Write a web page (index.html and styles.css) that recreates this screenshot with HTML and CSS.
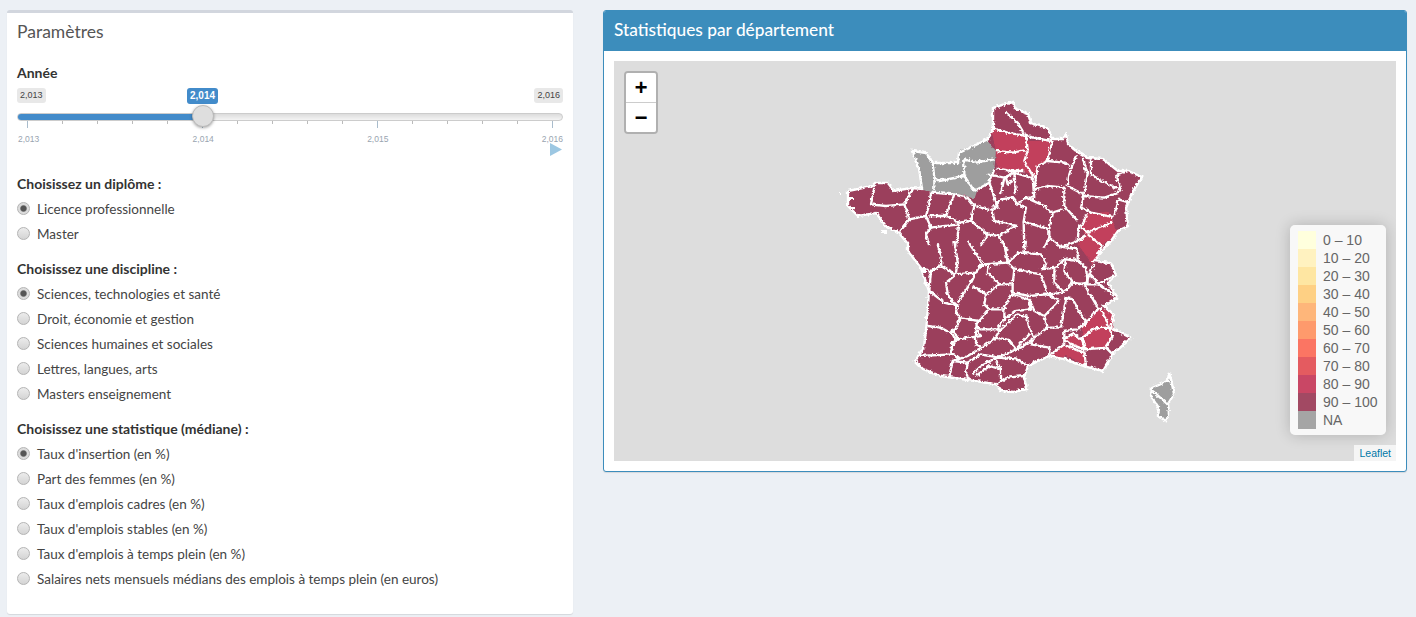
FILE: index.html
```html
<!DOCTYPE html>
<html lang="fr">
<head>
<meta charset="utf-8">
<title>Statistiques par département</title>
<link rel="stylesheet" href="styles.css">
</head>
<body>
<div class="page">
  <aside class="box params">
    <h3 class="params-title">Paramètres</h3>
    <div class="group-label">Année</div>
    <div class="slider">
      <div class="slider-edges"><span class="edge">2,013</span><span class="edge">2,016</span></div>
      <span class="current">2,014</span>
      <div class="track"><div class="track-fill"></div></div>
      <span class="handle"></span>
      <div class="ticks">
        <i class="tick major"></i><i class="tick"></i><i class="tick"></i><i class="tick"></i><i class="tick"></i>
        <i class="tick major"></i><i class="tick"></i><i class="tick"></i><i class="tick"></i><i class="tick"></i>
        <i class="tick major"></i><i class="tick"></i><i class="tick"></i><i class="tick"></i><i class="tick"></i>
        <i class="tick major"></i>
      </div>
      <div class="tick-labels"><span>2,013</span><span>2,014</span><span>2,015</span><span>2,016</span></div>
      <div class="play-row"><svg class="play" width="12" height="13" viewBox="0 0 12 13"><path d="M0 0L12 6.500L0 13Z"/></svg></div>
    </div>
    <div class="group-label group-head">Choisissez un diplôme :</div>
    <label class="radio"><input type="radio" name="d" checked>Licence professionnelle</label>
    <label class="radio"><input type="radio" name="d">Master</label>
    <div class="group-label group-head group-next">Choisissez une discipline :</div>
    <label class="radio"><input type="radio" name="s" checked>Sciences, technologies et santé</label>
    <label class="radio"><input type="radio" name="s">Droit, économie et gestion</label>
    <label class="radio"><input type="radio" name="s">Sciences humaines et sociales</label>
    <label class="radio"><input type="radio" name="s">Lettres, langues, arts</label>
    <label class="radio"><input type="radio" name="s">Masters enseignement</label>
    <div class="group-label group-head group-next">Choisissez une statistique (médiane) :</div>
    <label class="radio"><input type="radio" name="t" checked>Taux d'insertion (en %)</label>
    <label class="radio"><input type="radio" name="t">Part des femmes (en %)</label>
    <label class="radio"><input type="radio" name="t">Taux d'emplois cadres (en %)</label>
    <label class="radio"><input type="radio" name="t">Taux d'emplois stables (en %)</label>
    <label class="radio"><input type="radio" name="t">Taux d'emplois à temps plein (en %)</label>
    <label class="radio"><input type="radio" name="t">Salaires nets mensuels médians des emplois à temps plein (en euros)</label>
  </aside>
  <section class="box stats">
    <h3 class="stats-title">Statistiques par département</h3>
    <div class="stats-body">
      <div class="map">
        <svg class="map-svg" width="782" height="400" viewBox="614 61 782 400">
          <defs>
            <filter id="rough" filterUnits="userSpaceOnUse" x="614" y="61" width="782" height="400" color-interpolation-filters="sRGB">
              <feTurbulence type="turbulence" baseFrequency="0.22" numOctaves="2" seed="4" result="n"/>
              <feDisplacementMap in="SourceGraphic" in2="n" scale="3.500" xChannelSelector="R" yChannelSelector="G"/>
            </filter>
          </defs>
          <g class="land" filter="url(#rough)">
          <path class="dept" d="M992 107L1012 101L1014 108L1027 113L1030 122L1048 128L1050 138L1062 138L1065 133L1067 143L1075 150L1087 157L1102 158L1117 170L1127 170L1141 176L1132 190L1125 207L1127 225L1117 230L1110 240L1093 260L1110 262L1115 275L1107 282L1117 297L1103 305L1113 315L1110 327L1130 337L1112 353L1102 370L1083 365L1063 358L1048 355L1027 365L1023 377L1026 388L1013 391L1000 390L995 383L967 379L940 375L922 368L914 360L923 347L926 320L928 290L920 267L907 250L907 243L898 232L885 225L875 212L857 215L847 205L847 190L872 185L875 182L887 182L893 190L910 187L921 188L918 167L912 150L925 152L932 162L957 162L958 152L987 138L992 128Z"/>
          <g transform="translate(830 90) scale(.3333)">
            <path class="na" d="M245 180L285 185L305 215L380 218L385 180L470 145L495 180L490 235L475 275L440 295L430 325L400 312L370 310L300 305L272 295L265 230Z"/>
            <path class="high" d="M480 110L530 125L585 135L590 150L660 150L650 210L620 225L610 262L580 240L540 240L497 232L495 180Z"/>
            <path class="high" d="M750 410L770 370L830 362L850 400L860 425L815 465L800 490L785 520L740 460L765 435Z"/>
            <g class="borders">
              <polyline points="525,65 560,95 582,132"/>
              <polyline points="480,110 530,125 585,135 660,150"/>
              <polyline points="495,180 545,185 582,178"/>
              <polyline points="585,135 590,180 580,210 610,262"/>
              <polyline points="497,232 540,240 580,240"/>
              <polyline points="665,150 650,210 620,225 610,295"/>
              <polyline points="650,210 700,215 718,225"/>
              <polyline points="735,195 715,250 710,285"/>
              <polyline points="612,295 650,285 700,290 700,345 740,390"/>
              <polyline points="755,200 770,250 760,310"/>
              <polyline points="780,205 780,250 810,270 860,295"/>
              <polyline points="855,255 890,240"/>
              <polyline points="855,255 870,290 865,305"/>
              <polyline points="755,315 820,320 865,305"/>
              <polyline points="862,325 895,335"/>
              <polyline points="865,320 850,375"/>
              <polyline points="710,285 760,312 750,350 780,365 845,378"/>
              <polyline points="750,410 770,370"/>
              <polyline points="750,410 770,425 845,395"/>
              <polyline points="770,430 815,465 800,490"/>
              <polyline points="745,400 740,450 765,435"/>
              <polyline points="305,215 310,260 310,300"/>
              <polyline points="310,262 325,270 400,255 430,300"/>
              <polyline points="400,205 400,255"/>
              <polyline points="400,205 435,215 490,205"/>
              <polyline points="430,300 475,275"/>
              <polyline points="475,275 490,235"/>
              <polyline points="470,250 520,260 510,310"/>
              <polyline points="520,260 550,245"/>
              <polyline points="550,245 555,310"/>
              <polyline points="525,260 530,280 545,270"/>
              <polyline points="550,245 605,262 610,320 585,320 560,340 545,320 510,325 485,355"/>
              <polyline points="475,275 500,350 485,355"/>
              <polyline points="430,345 485,360 490,390 555,405 505,435 470,430 420,390 430,345"/>
              <polyline points="585,320 640,345 665,370 655,415 620,405 578,392 585,350 560,340"/>
              <polyline points="665,365 695,355"/>
              <polyline points="655,415 655,440 690,470 740,450"/>
              <polyline points="578,392 580,470"/>
              <polyline points="655,440 640,470"/>
              <polyline points="505,435 530,480"/>
              <polyline points="470,430 450,465"/>
              <polyline points="130,290 120,340 165,345 220,340 245,295"/>
              <polyline points="220,340 235,385 205,425"/>
              <polyline points="235,385 285,375 300,410 285,430 295,465"/>
              <polyline points="300,305 295,340 285,375"/>
              <polyline points="300,305 370,310 345,375 295,375"/>
              <polyline points="370,310 410,320 430,345"/>
              <polyline points="345,375 385,395 420,390"/>
              <polyline points="300,410 385,400 375,470"/>
            </g>
          </g>
          <g transform="translate(900 240) scale(.3333)">
            <path class="na" d="M755 440L800 420L805 395L810 415L818 460L800 490L805 520L795 540L770 525L775 500L750 465Z"/>
            <path class="high" d="M545 262L600 200L640 225L635 290L615 320L555 325L545 290Z"/>
            <path class="high" d="M490 295L520 278L545 300L550 325L510 310Z"/>
            <path class="high" d="M455 345L490 312L550 335L555 375L510 350Z"/>
            <g class="borders">
              <polyline points="110,10 122,50 120,75 90,90 75,85"/>
              <polyline points="120,75 160,100 225,95 245,70 320,65"/>
              <polyline points="160,0 170,60 165,95"/>
              <polyline points="200,0 230,45 245,70"/>
              <polyline points="310,10 320,65 355,35 420,40 438,70 425,85"/>
              <polyline points="375,0 370,35"/>
              <polyline points="470,15 530,25 530,60 495,55"/>
              <polyline points="90,90 85,150 130,185 165,195 140,160 135,125 165,100"/>
              <polyline points="225,95 210,125 170,185"/>
              <polyline points="215,135 255,160 295,130 260,95 265,70"/>
              <polyline points="320,65 340,85 335,130 295,130"/>
              <polyline points="340,85 420,100 440,160 385,165 335,155 335,130"/>
              <polyline points="170,190 165,215 180,232 235,240 265,205 250,190 255,160"/>
              <polyline points="265,205 310,205 330,160"/>
              <polyline points="330,160 385,175 390,205 345,210 310,235 310,205"/>
              <polyline points="440,160 475,180 430,225 400,210 385,175"/>
              <polyline points="420,85 465,80 495,50"/>
              <polyline points="460,85 460,125 490,155 515,125 490,90 495,55"/>
              <polyline points="440,160 490,155"/>
              <polyline points="515,125 550,130 585,190 595,200"/>
              <polyline points="530,60 555,80 560,125 530,130"/>
              <polyline points="580,70 565,100 555,130 595,130 610,120 640,105"/>
              <polyline points="565,100 595,130 650,170"/>
              <polyline points="490,170 515,175 540,220 555,240 530,265 490,270"/>
              <polyline points="495,175 480,260 440,260 430,225"/>
              <polyline points="595,200 560,240 545,262"/>
              <polyline points="310,235 290,265 235,265 225,250 240,235"/>
              <polyline points="375,220 385,260 400,290 440,260"/>
              <polyline points="235,240 225,265 240,285 170,295 160,270 180,232"/>
              <polyline points="80,255 120,260 155,280 165,300 150,330"/>
              <polyline points="160,270 150,275"/>
              <polyline points="225,270 225,310 245,320 280,295 295,270 290,265"/>
              <polyline points="170,295 155,305 150,335 175,355 200,345 240,320"/>
              <polyline points="295,270 350,220 375,230"/>
              <polyline points="385,280 345,325 320,295 280,290"/>
              <polyline points="345,325 295,350 240,340 200,365"/>
              <polyline points="345,330 395,295 390,310 445,320 445,345"/>
              <polyline points="345,355 380,375"/>
              <polyline points="490,270 490,310 445,345"/>
              <polyline points="50,345 160,340 175,355 155,360 145,410"/>
              <polyline points="155,360 200,365 195,400 205,418"/>
              <polyline points="240,375 290,350 345,355"/>
              <polyline points="225,405 265,375 300,385"/>
              <polyline points="285,360 300,385 300,420"/>
              <polyline points="290,430 320,410 372,405"/>
              <polyline points="240,375 215,400"/>
              <polyline points="490,295 520,278 545,300 550,325 510,310 490,295"/>
              <polyline points="490,312 550,335 555,375"/>
              <polyline points="545,290 580,262 625,260 635,290 615,320 555,325 545,290"/>
              <polyline points="625,260 600,200"/>
              <polyline points="615,320 640,345"/>
              <polyline points="755,450 800,490"/>
            </g>
          </g>
          <path class="coast" d="M992 107L1012 101L1014 108L1027 113L1030 122L1048 128L1050 138L1062 138L1065 133L1067 143L1075 150L1087 157L1102 158L1117 170L1127 170L1141 176L1132 190L1125 207L1127 225L1117 230L1110 240L1093 260L1110 262L1115 275L1107 282L1117 297L1103 305L1113 315L1110 327L1130 337L1112 353L1102 370L1083 365L1063 358L1048 355L1027 365L1023 377L1026 388L1013 391L1000 390L995 383L967 379L940 375L922 368L914 360L923 347L926 320L928 290L920 267L907 250L907 243L898 232L885 225L875 212L857 215L847 205L847 190L872 185L875 182L887 182L893 190L910 187L921 188L918 167L912 150L925 152L932 162L957 162L958 152L987 138L992 128Z"/>
          <path class="coast" d="M1151 387L1167 380L1168 372L1170 378L1173 393L1167 403L1168 413L1165 420L1157 415L1158 407L1150 395Z"/>
          <g class="islets"><rect x="838" y="191" width="2" height="2"/><rect x="880" y="229" width="6" height="3"/><rect x="921" y="266" width="4" height="6"/><rect x="924" y="316" width="3" height="4"/><rect x="847" y="197" width="6" height="2"/><rect x="848" y="206" width="7" height="2"/></g>
          </g>
        </svg>
        <div class="zoom-control">
          <a class="zoom-btn">+</a>
          <a class="zoom-btn">−</a>
        </div>
        <div class="legend">
          <div class="legend-row"><i class="sw s0"></i>0 – 10</div>
          <div class="legend-row"><i class="sw s1"></i>10 – 20</div>
          <div class="legend-row"><i class="sw s2"></i>20 – 30</div>
          <div class="legend-row"><i class="sw s3"></i>30 – 40</div>
          <div class="legend-row"><i class="sw s4"></i>40 – 50</div>
          <div class="legend-row"><i class="sw s5"></i>50 – 60</div>
          <div class="legend-row"><i class="sw s6"></i>60 – 70</div>
          <div class="legend-row"><i class="sw s7"></i>70 – 80</div>
          <div class="legend-row"><i class="sw s8"></i>80 – 90</div>
          <div class="legend-row"><i class="sw s9"></i>90 – 100</div>
          <div class="legend-row"><i class="sw sn"></i>NA</div>
        </div>
        <div class="attribution">Leaflet</div>
      </div>
    </div>
  </section>
</div>
</body>
</html>
```
FILE: styles.css
```css
* { box-sizing: border-box; }
html, body { margin: 0; height: 100%; }
body {
  background: #ecf0f5;
  font-family: "Lato", "Liberation Sans", sans-serif;
  font-size: 14px;
  color: #444;
  overflow: hidden;
}
.page {
  display: flex;
  align-items: flex-start;
  gap: 30px;
  padding: 10px 9px 0 7px;
}
.box { background: #fff; border-radius: 3px; box-shadow: 0 1px 1px rgba(0,0,0,.1); }
.params {
  width: 566px;
  height: 604px;
  flex: none;
  border-top: 3px solid #d2d6de;
  padding: 0 10px;
}
.params-title {
  margin: 0;
  padding-top: 9px;
  height: 50px;
  font-size: 17.5px;
  font-weight: 400;
  line-height: 20px;
  color: #555;
}
.group-label { font-weight: 700; line-height: 20px; color: #333; }
.group-head { height: 25px; line-height: 25px; }
.group-next { margin-top: 10px; }
.radio {
  display: flex;
  align-items: center;
  gap: 7px;
  height: 25px;
  font-size: 13.5px;
  color: #444;
}
.radio input {
  appearance: none;
  -webkit-appearance: none;
  flex: none;
  width: 13px;
  height: 13px;
  margin: 0;
  border-radius: 50%;
  border: 1px solid #b4b4b4;
  background: linear-gradient(#ececec, #d4d4d4);
}
.radio input:checked {
  background: radial-gradient(circle, #555 0 2.6px, #999 3.2px, #dcdcdc 3.8px);
}
.slider { position: relative; height: 88px; font-family: "Liberation Sans", sans-serif; }
.slider-edges { display: flex; justify-content: space-between; padding-top: 5px; }
.edge {
  height: 15px;
  padding: 0 3px;
  background: #e8e8e8;
  border-radius: 3px;
  font-size: 9px;
  line-height: 15px;
  color: #444;
}
.current {
  position: absolute;
  left: 170px;
  top: 5px;
  width: 31px;
  height: 16px;
  background: #428bca;
  border-radius: 3px;
  font-size: 10px;
  font-weight: 700;
  line-height: 16px;
  text-align: center;
  color: #fff;
}
.track {
  margin-top: 10px;
  height: 8px;
  border-radius: 4px;
  background: linear-gradient(#dcdcdc, #f4f4f4);
  border: 1px solid #ccc;
  overflow: hidden;
}
.track-fill { width: 186px; background: #428bca; margin: -1px; height: 8px; }
.handle {
  position: absolute;
  left: 175px;
  top: 22px;
  width: 22px;
  height: 22px;
  border-radius: 50%;
  background: #dedede;
  border: 1px solid #bbb;
  box-shadow: 0 1px 3px rgba(0,0,0,.35);
}
.ticks { display: flex; justify-content: space-between; align-items: flex-start; padding: 0 10px; height: 8px; }
.tick { width: 1px; height: 3px; background: #bbb; flex: none; }
.tick.major { height: 7px; background: #a9bccc; }
.tick-labels {
  display: flex;
  justify-content: space-between;
  padding: 3px 0 0 1px;
  font-size: 8.500px;
  line-height: 14px;
  color: #99a4b0;
}
.play-row { display: flex; justify-content: flex-end; padding-right: 1px; margin-top: -3px; }
.play { fill: #9cc7e2; display: block; }
.stats {
  width: 804px;
  height: 462px;
  flex: none;
  border: 1px solid #3c8dbc;
  overflow: hidden;
}
.stats-title {
  margin: -1px -1px 0;
  height: 41px;
  padding: 0 10px 0 11px;
  background: #3c8dbc;
  color: #fff;
  font-size: 17.300px;
  font-weight: 500;
  line-height: 39px;
}
.stats-body { padding: 10px; }
.map { position: relative; height: 400px; background: #ddd; overflow: hidden; }
.map-svg { display: block; }
.dept { fill: #9b3f5c; }
.na { fill: #9e9e9e; }
.high { fill: #c2405c; }
.borders polyline { fill: none; stroke: #fff; stroke-width: 7; stroke-linejoin: round; }
.coast { fill: none; stroke: #fff; stroke-width: 2.400; }
.islets { fill: #fff; }
.zoom-control {
  position: absolute;
  left: 10px;
  top: 10px;
  width: 34px;
  border: 2px solid rgba(0,0,0,.2);
  border-radius: 4px;
  background-clip: padding-box;
}
.zoom-btn {
  display: block;
  height: 29px;
  background: #fff;
  color: #000;
  font: 700 22px/33px "Liberation Mono", monospace;
  text-align: center;
  overflow: hidden;
}
.zoom-btn:first-child { border-bottom: 1px solid #ccc; height: 30px; border-radius: 2px 2px 0 0; }
.zoom-btn:last-child { border-radius: 0 0 2px 2px; }
.legend {
  position: absolute;
  right: 10px;
  bottom: 26px;
  width: 96px;
  height: 210px;
  padding: 6px 8px;
  border-radius: 5px;
  background: rgba(255,255,255,.8);
  box-shadow: 0 0 15px rgba(0,0,0,.2);
  font: 14px/18px "Liberation Sans", Arial, sans-serif;
  color: #666;
}
.legend-row { display: flex; height: 18px; gap: 7px; white-space: nowrap; }
.sw { width: 18px; height: 18px; flex: none; }
.s0 { background: #ffffdd; }
.s1 { background: #fff2c0; }
.s2 { background: #fee6a2; }
.s3 { background: #fed084; }
.s4 { background: #feb67a; }
.s5 { background: #fe9a6c; }
.s6 { background: #fb7563; }
.s7 { background: #e45b60; }
.s8 { background: #c94765; }
.s9 { background: #a24963; }
.sn { background: #a5a5a5; }
.attribution {
  position: absolute;
  right: 0;
  bottom: 0;
  height: 16px;
  padding: 0 5px;
  background: rgba(255,255,255,.7);
  font: 10.500px/16px "Liberation Sans", Arial, sans-serif;
  color: #0078a8;
}
```
